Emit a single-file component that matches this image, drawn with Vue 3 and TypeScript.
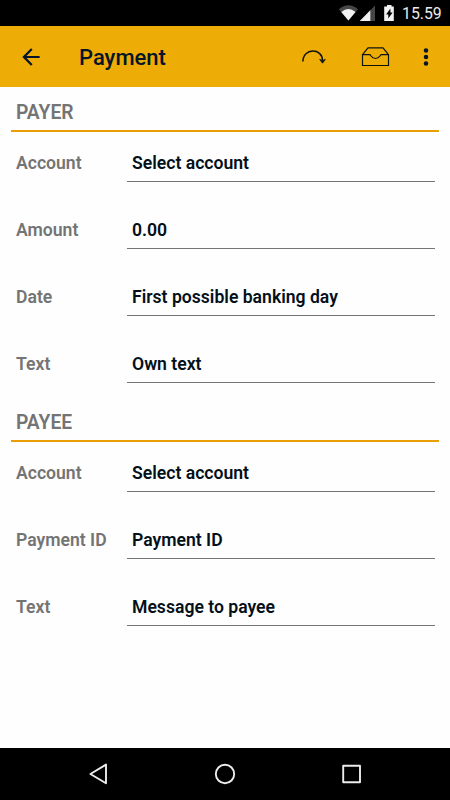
<script setup lang="ts">
interface Field {
  label: string
  value: string
}

interface Section {
  title: string
  fields: Field[]
}

const sections: Section[] = [
  {
    title: 'PAYER',
    fields: [
      { label: 'Account', value: 'Select account' },
      { label: 'Amount', value: '0.00' },
      { label: 'Date', value: 'First possible banking day' },
      { label: 'Text', value: 'Own text' },
    ],
  },
  {
    title: 'PAYEE',
    fields: [
      { label: 'Account', value: 'Select account' },
      { label: 'Payment ID', value: 'Payment ID' },
      { label: 'Text', value: 'Message to payee' },
    ],
  },
]
</script>

<template>
  <div class="screen">
    <div class="status">
      <svg class="status-icons" width="60" height="26" viewBox="338 0 60 26">
        <path d="M338.8 9.2Q348.4 1.4 358 9.2L348.4 20.6Z" fill="#464646" />
        <path d="M341.3 12Q348.4 6 355.5 12L348.4 20.6Z" fill="#f2f2f2" />
        <path d="M375 5.5V21H359.8Z" fill="#464646" />
        <path d="M370.3 10.2V21H359.8Z" fill="#f2f2f2" />
        <path d="M387 5h4.5v1.6h2.3V21h-9.6V6.6h2.8Z" fill="#f2f2f2" />
        <path d="M390.4 8.5l-4.3 6h2.2v4l4.3-6h-2.2Z" fill="#000" />
      </svg>
      <span class="clock">15.59</span>
    </div>

    <header class="bar">
      <svg class="back" width="26" height="26" viewBox="0 0 24 24">
        <path d="M20 11.1H7.83l5.59-5.69L12 4l-8 8 8 8 1.41-1.41L7.83 12.9H20z" fill="#04152a" />
      </svg>
      <h1 class="title">Payment</h1>
      <svg class="actions" width="150" height="61" viewBox="300 26 150 61" fill="none" stroke="#0d1410">
        <path d="M302.9 61.5C302.9 47.7 322.5 47.7 322.5 60.5" stroke-width="1.5" />
        <path d="M319.6 59.4l2.9 1 2.9-1-2.9 3.8Z" fill="#0d1410" stroke-width=".7" />
        <path d="M362.5 54.7L368 47.9H383L388.5 54.7V65.5H362.5V54.7H369.7C371 54.7 371 58.5 375.5 58.5S380 54.7 381.3 54.7H388.5" stroke-width="1.2" />
        <g fill="#04152a" stroke="none">
          <circle cx="426" cy="50.4" r="2.25" />
          <circle cx="426" cy="57" r="2.25" />
          <circle cx="426" cy="63.5" r="2.25" />
        </g>
      </svg>
    </header>

    <main class="form">
      <section v-for="section in sections" :key="section.title" class="section">
        <h2 class="heading">{{ section.title }}</h2>
        <div v-for="field in section.fields" :key="field.label" class="row">
          <span class="label">{{ field.label }}</span>
          <span class="value">{{ field.value }}</span>
        </div>
      </section>
    </main>

    <nav class="nav">
      <svg width="450" height="52" viewBox="0 748 450 52" fill="none" stroke="#ececec" stroke-width="1.9" stroke-linejoin="round">
        <path d="M90.4 774L106 764.6V783.2Z" />
        <circle cx="225" cy="774" r="9.2" />
        <rect x="343.2" y="765.8" width="16.8" height="16.4" />
      </svg>
    </nav>
  </div>
</template>

<style>
body {
  margin: 0;
  background: #fff;
}
</style>

<style scoped>
.screen {
  display: flex;
  flex-direction: column;
  width: 450px;
  height: 800px;
  overflow: hidden;
  background: #fefefe;
  font-family: Roboto, "Liberation Sans", sans-serif;
}
.status {
  display: flex;
  align-items: center;
  justify-content: flex-end;
  height: 26px;
  flex: none;
  padding-right: 9px;
  background: #000;
}
.status-icons {
  margin-right: 4px;
}
.clock {
  box-sizing: border-box;
  width: 39px;
  height: 26px;
  padding-top: 2px;
  font-size: 15.8px;
  line-height: 24px;
  color: #ececec;
  white-space: nowrap;
}
.bar {
  display: flex;
  align-items: center;
  height: 61px;
  flex: none;
  background: #eeac06;
}
.back {
  margin-left: 18px;
}
.title {
  margin: 3px 0 0 35px;
  flex: 1;
  font-size: 22px;
  line-height: 30px;
  font-weight: 500;
  color: #04152a;
}
.form {
  flex: 1;
  padding: 0 11px;
}
.section {
  height: 309.6px;
}
.heading {
  box-sizing: border-box;
  height: 45px;
  margin: 0;
  padding: 10px 0 0 5px;
  border-bottom: 2px solid #e99f04;
  font-size: 19.3px;
  line-height: 32px;
  font-weight: 600;
  color: #747474;
}
.row {
  display: flex;
  height: 67.1px;
  font-size: 17.6px;
  line-height: 24px;
  font-weight: 600;
}
.label {
  box-sizing: border-box;
  width: 116px;
  padding: 19px 0 0 5px;
  color: #747474;
}
.value {
  box-sizing: border-box;
  width: 308px;
  height: 50px;
  padding: 19px 0 0 5px;
  border-bottom: 1px solid #747474;
  color: #04101a;
  white-space: nowrap;
}
.nav {
  display: flex;
  height: 52px;
  flex: none;
  background: #000;
}
</style>
